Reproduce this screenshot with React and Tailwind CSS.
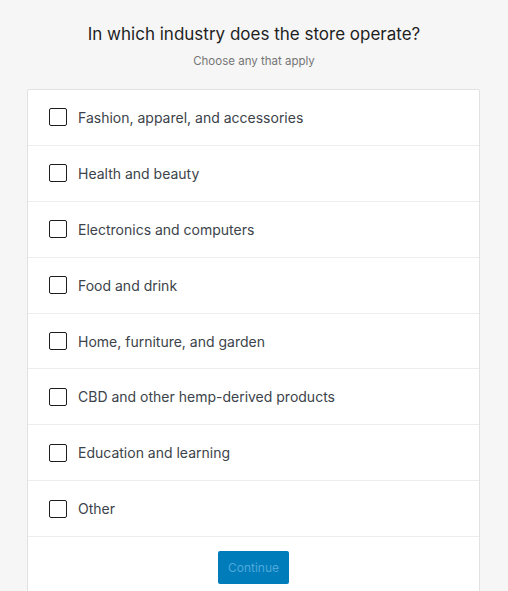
export default function App() {
  const items = [
    "Fashion, apparel, and accessories",
    "Health and beauty",
    "Electronics and computers",
    "Food and drink",
    "Home, furniture, and garden",
    "CBD and other hemp-derived products",
    "Education and learning",
    "Other",
  ];
  return (
    <div className="min-h-[591px] w-full bg-[#f6f6f6] overflow-hidden" style={{ fontFamily: "Inter, 'Noto Sans', sans-serif" }}>
      <div className="pt-[22px] flex flex-col items-center">
        <h1 className="text-[17px] leading-[24px] text-[#1e1e1e] font-normal">In which industry does the store operate?</h1>
        <p className="mt-[8px] text-[11.5px] leading-[14px] text-[#757575]">Choose any that apply</p>
      </div>
      <div className="mx-[27px] mt-[21px] bg-white border border-[#e2e2e2] rounded-[2px] w-[453px]">
        {items.map((t) => (
          <div key={t} className="h-[55.9px] border-b border-[#ededed] flex items-center pl-[21px]">
            <span className="w-[18px] h-[18px] border-[1.5px] border-[#1e1e1e] rounded-[2px] bg-white shrink-0" />
            <span className="ml-[11px] text-[14px] text-[#3c434a]">{t}</span>
          </div>
        ))}
        <div className="flex justify-center pt-[14px] pb-[20px]">
          <button className="w-[71px] h-[33px] bg-[#007cba] rounded-[2px] text-[12px] text-[#4fa9db]">Continue</button>
        </div>
      </div>
    </div>
  );
}
